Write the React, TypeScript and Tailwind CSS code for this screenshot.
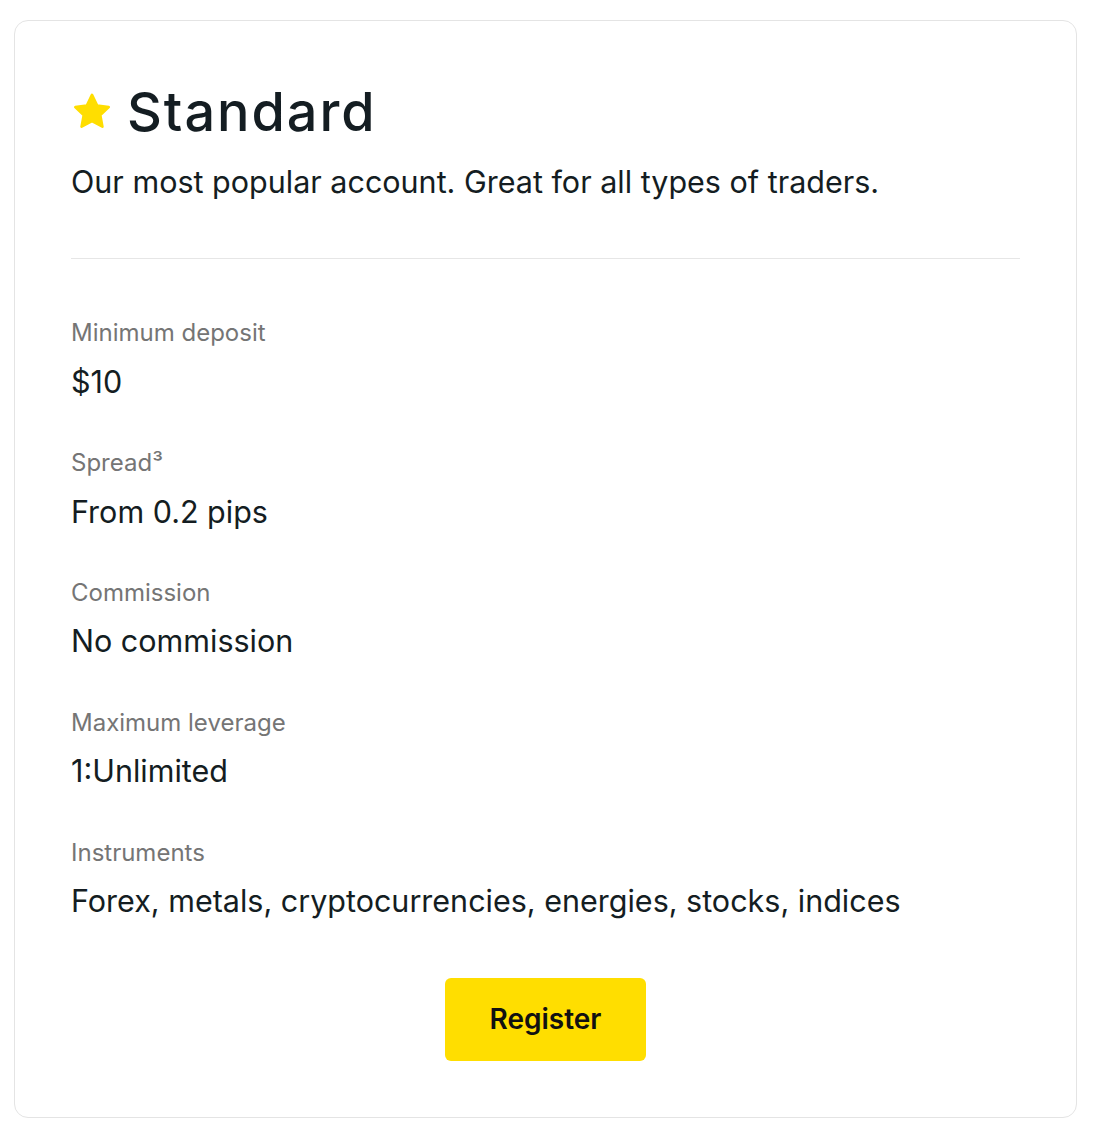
const rows = [
  { label: "Minimum deposit", value: "$10" },
  { label: "Spread³", value: "From 0.2 pips" },
  { label: "Commission", value: "No commission" },
  { label: "Maximum leverage", value: "1:Unlimited" },
  { label: "Instruments", value: "Forex, metals, cryptocurrencies, energies, stocks, indices" }
];

function Star() {
  return (
    <svg className="h-[42px] w-[42px] shrink-0" viewBox="0 0 24 24" aria-hidden="true">
      <path
        d="M12 2.2l2.95 6.1 6.6.9-4.8 4.6 1.2 6.6L12 17.2l-5.95 3.2 1.2-6.6-4.8-4.6 6.6-.9z"
        fill="#ffde00"
        stroke="#ffde00"
        strokeLinejoin="round"
        strokeWidth="1.5"
      />
    </svg>
  );
}

export default function App() {
  return (
    <div className="min-h-screen bg-white pl-[14px] pr-[16px] pt-[20px] font-['Inter',sans-serif] text-[#141d22]">
      <section className="rounded-[14px] border border-[#e4e4e4] bg-white px-14 pb-14 pt-[59px]">
        <div className="flex items-center gap-[14px]">
          <Star />
          <h1 className="text-[54px] font-medium leading-[1.2] tracking-[0.036em]">Standard</h1>
        </div>
        <p className="mt-[16px] text-[30.5px] leading-[1.4]">Our most popular account. Great for all types of traders.</p>

        <hr className="mt-[55px] border-[#e6e6e6]" />

        <dl className="mt-[58px] flex flex-col gap-[46px]">
          {rows.map((row) => (
            <div key={row.label}>
              <dt className="text-[24px] leading-[1.3] text-[#757575]">{row.label}</dt>
              <dd className="mt-[13px] text-[30.5px] leading-[1.3]">{row.value}</dd>
            </div>
          ))}
        </dl>

        <div className="mt-[57px] flex justify-center">
          <button className="h-[83px] w-[201px] rounded-[6px] bg-[#ffde00] text-[28px] font-semibold text-[#111]">
            Register
          </button>
        </div>
      </section>
    </div>
  );
}
